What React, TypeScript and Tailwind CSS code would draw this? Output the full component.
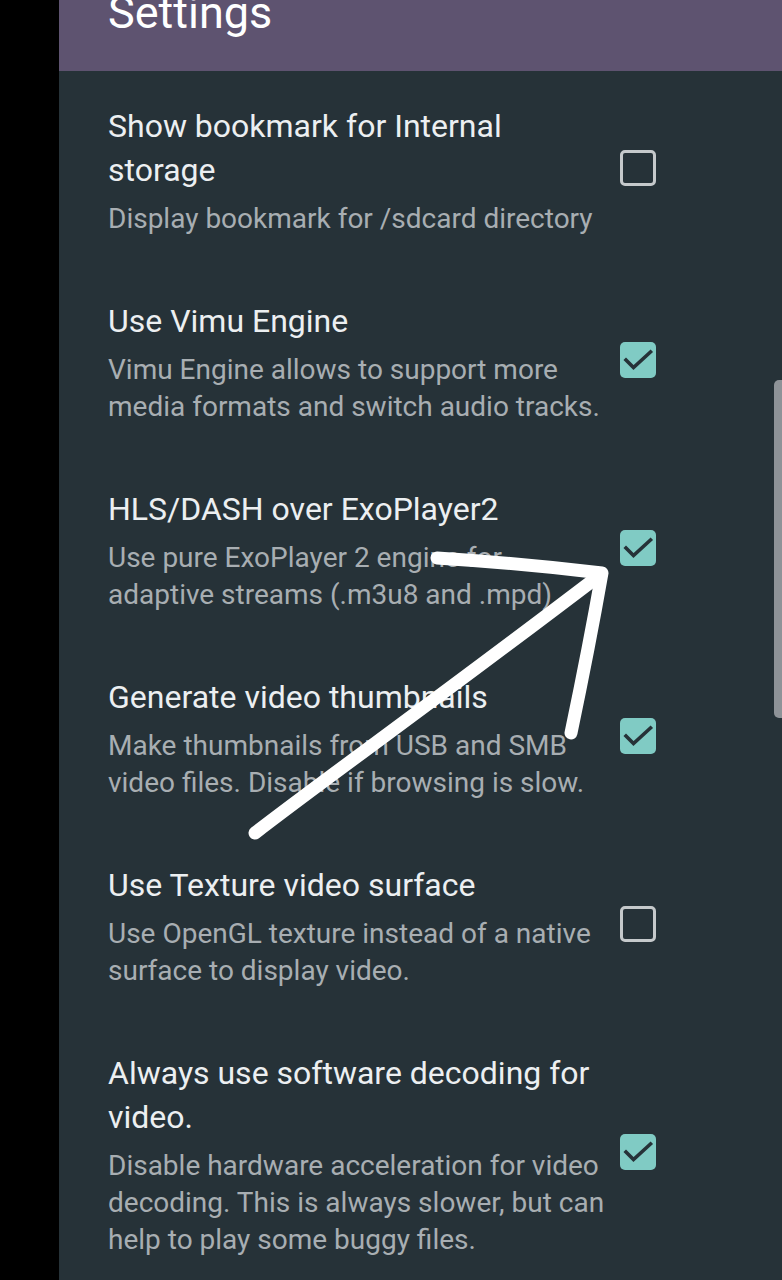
import React from 'react';

interface Pref {
  title: string;
  summary: string;
  checked: boolean;
}

const prefs: Pref[] = [
  {
    title: 'Show bookmark for Internal storage',
    summary: 'Display bookmark for /sdcard directory',
    checked: false,
  },
  {
    title: 'Use Vimu Engine',
    summary: 'Vimu Engine allows to support more media formats and switch audio tracks.',
    checked: true,
  },
  {
    title: 'HLS/DASH over ExoPlayer2',
    summary: 'Use pure ExoPlayer 2 engine for adaptive streams (.m3u8 and .mpd)',
    checked: true,
  },
  {
    title: 'Generate video thumbnails',
    summary: 'Make thumbnails from USB and SMB video files. Disable if browsing is slow.',
    checked: true,
  },
  {
    title: 'Use Texture video surface',
    summary: 'Use OpenGL texture instead of a native surface to display video.',
    checked: false,
  },
  {
    title: 'Always use software decoding for video.',
    summary: 'Disable hardware acceleration for video decoding. This is always slower, but can help to play some buggy files.',
    checked: true,
  },
];

function CheckBox({ checked }: { checked: boolean }) {
  if (!checked) {
    return <div className="w-[36px] h-[36px] mb-[5px] rounded-[5px] border-[3px] border-[#c5c9cb] shrink-0" />;
  }
  return (
    <div className="w-[36px] h-[36px] mb-[5px] rounded-[5px] bg-[#80cbc4] shrink-0 flex items-center justify-center">
      <svg className="w-[36px] h-[36px]" viewBox="0 0 36 36" fill="none">
        <polyline points="6,18 13.5,25.5 30.5,10" stroke="#263238" strokeWidth="3.6" strokeLinecap="square" />
      </svg>
    </div>
  );
}

function PrefRow({ pref }: { pref: Pref }) {
  return (
    <div className="flex items-center py-[31px] pl-[49px] pr-[126px]">
      <div className="flex-1 min-w-0 pr-[12px]">
        <div className="text-[32px] leading-[44px] text-[#eceff1]">{pref.title}</div>
        <div className="mt-[8px] text-[28px] leading-[37px] text-[#a8aeb2]">{pref.summary}</div>
      </div>
      <CheckBox checked={pref.checked} />
    </div>
  );
}

export default function App() {
  return (
    <div
      className="relative w-[782px] h-[1280px] overflow-hidden flex bg-black"
      style={{ fontFamily: 'Roboto, "Noto Sans", sans-serif' }}
    >
      <div className="w-[59px] shrink-0 bg-black" />
      <div className="flex-1 flex flex-col bg-[#263238]">
        <div className="h-[71px] shrink-0 bg-[#5e5370] overflow-hidden pl-[49px]">
          <div className="-mt-[10px] text-[45px] leading-[45px] text-white">Settings</div>
        </div>
        <div className="pt-[2px]">
          {prefs.map((p) => (
            <PrefRow key={p.title} pref={p} />
          ))}
        </div>
      </div>

      {/* scrollbar thumb */}
      <div className="absolute right-0 top-[380px] w-[8px] h-[338px] rounded-l-[5px] bg-[#8e9398]" />

      {/* hand-drawn arrow overlay */}
      <svg className="absolute inset-0 pointer-events-none" width="782" height="1280" viewBox="0 0 782 1280" fill="none">
        <path
          d="M255 833 C 330 775, 420 712, 600 575"
          stroke="#ffffff"
          strokeWidth="13"
          strokeLinecap="round"
        />
        <path
          d="M437 558 C 500 562, 560 568, 602 573 C 592 630, 580 690, 571 733"
          stroke="#ffffff"
          strokeWidth="13"
          strokeLinecap="round"
          strokeLinejoin="round"
        />
      </svg>
    </div>
  );
}
